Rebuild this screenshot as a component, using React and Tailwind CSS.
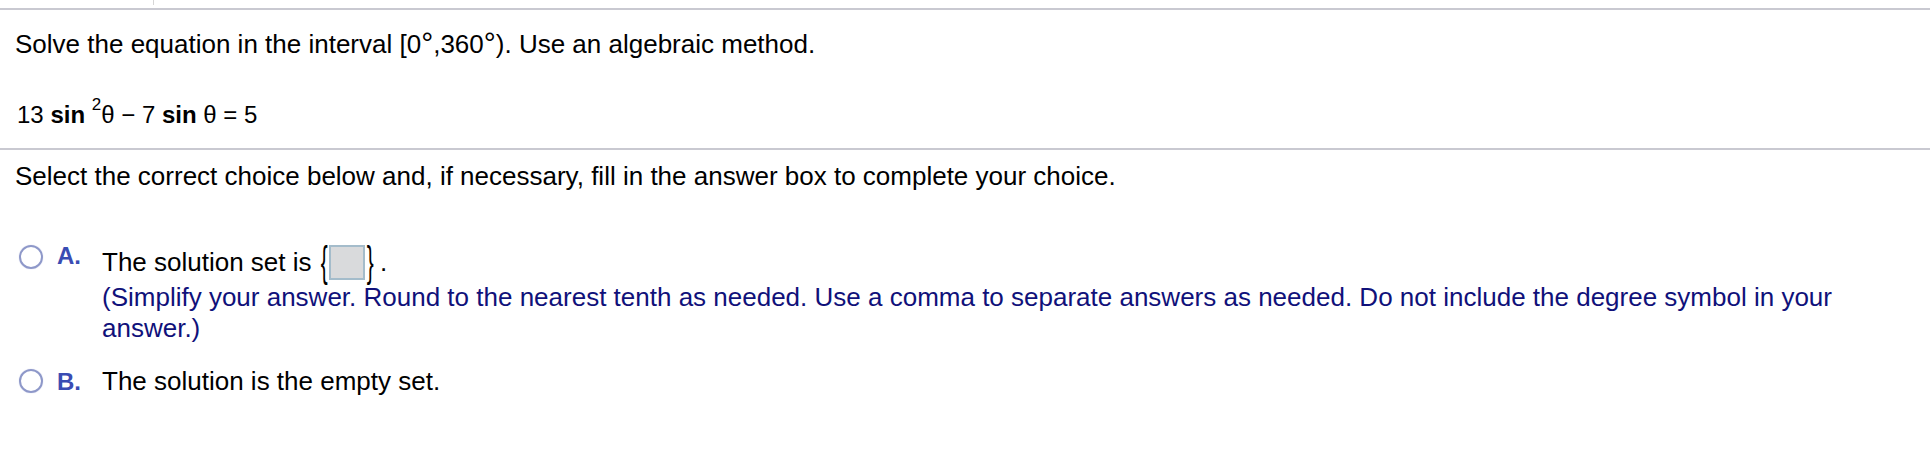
import React from "react";

const Radio = ({ className = "" }) => (
  <span
    className={`block w-[24px] h-[24px] shrink-0 rounded-full border-2 border-[#8e98c9] shadow-[0_0_1px_#b7bde0] ${className}`}
  />
);

const AnswerBox = () => (
  <span className="inline-flex items-center ml-[8px]">
    <span className="inline-block scale-y-[1.6] scale-x-[0.8] font-light leading-none text-[26px]">{"{"}</span>
    <span className="inline-block w-[36px] h-[35px] mx-[1px] bg-[#d9dadc] border-2 border-[#a4bccb]" />
    <span className="inline-block scale-y-[1.6] scale-x-[0.8] font-light leading-none text-[26px]">{"}"}</span>
    <span className="ml-[5px]">.</span>
  </span>
);

export default function App() {
  return (
    <div className="w-full min-h-[468px] bg-white text-black text-[26px] font-['Liberation_Sans',Arial,sans-serif]">
      {/* top strip */}
      <div className="relative h-[8px]">
        <div className="absolute left-[153px] top-0 w-px h-[5px] bg-[#d6d6d6]" />
      </div>
      <div className="h-[2px] bg-[#c9c9d1]" />

      {/* question */}
      <div className="pl-[15px] pt-[19px] pb-[18px] border-b-2 border-[#c9c9d1]">
        <p className="leading-[30px]">
          Solve the equation in the interval [0
          <span className="text-[30px] leading-[20px]">°</span>,360
          <span className="text-[30px] leading-[20px]">°</span>). Use an algebraic method.
        </p>
        <p className="mt-[41px] leading-[30px] pl-[2px] text-[24px]">
          13 <b>sin</b> <sup className="text-[17px] top-[-13px]">2</sup>θ − 7 <b>sin</b> θ = 5
        </p>
      </div>

      {/* answer area */}
      <div className="pl-[19px] pr-[15px]">
        <p className="mt-[11px] -ml-[4px] leading-[30px]">
          Select the correct choice below and, if necessary, fill in the answer box to complete your choice.
        </p>

        {/* option A */}
        <div className="mt-[54px] flex items-start">
          <Radio />
          <span className="ml-[14px] w-[45px] shrink-0 text-[24px] leading-[22px] font-bold text-[#3a4cb3]">A.</span>
          <div className="flex-1">
            <div className="flex items-center h-[36px] -mt-[1px] leading-[30px]">
              The solution set is
              <AnswerBox />
            </div>
            <p className="mt-[2px] leading-[31px] text-[#10117a]">
              (Simplify your answer. Round to the nearest tenth as needed. Use a comma to separate answers as needed. Do not include the degree symbol in your answer.)
            </p>
          </div>
        </div>

        {/* option B */}
        <div className="mt-[22px] flex items-center h-[30px]">
          <Radio />
          <span className="ml-[14px] w-[45px] shrink-0 text-[24px] font-bold text-[#3a4cb3] mt-[2px]">B.</span>
          <span className="leading-[30px]">The solution is the empty set.</span>
        </div>
      </div>
    </div>
  );
}
